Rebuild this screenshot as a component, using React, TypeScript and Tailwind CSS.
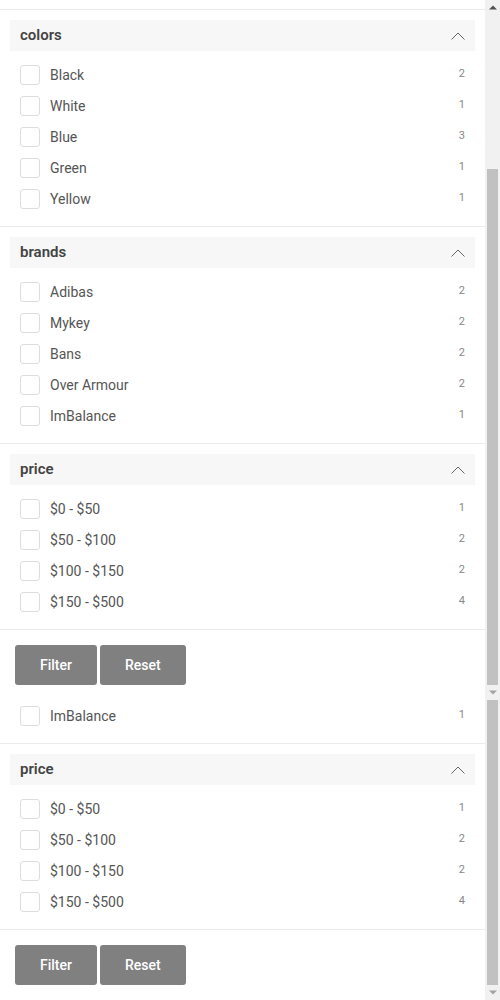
import React from "react";

type Item = [string, number];

interface Section {
  title: string;
  items: Item[];
}

const colors: Item[] = [
  ["Black", 2],
  ["White", 1],
  ["Blue", 3],
  ["Green", 1],
  ["Yellow", 1],
];

const brands: Item[] = [
  ["Adibas", 2],
  ["Mykey", 2],
  ["Bans", 2],
  ["Over Armour", 2],
  ["ImBalance", 1],
];

const prices: Item[] = [
  ["$0 - $50", 1],
  ["$50 - $100", 2],
  ["$100 - $150", 2],
  ["$150 - $500", 4],
];

function Row({ label, count }: { label: string; count: number }) {
  return (
    <li className="flex h-[31px] items-center px-[10px]">
      <span className="h-5 w-5 shrink-0 rounded-[3px] border border-[#dddddd] bg-white" />
      <span className="ml-[10px] flex-1 text-sm text-[#555]">{label}</span>
      <span className="text-[11px] text-[#888]">{count}</span>
    </li>
  );
}

function FilterSection({ title, items }: Section) {
  return (
    <div className="border-b border-[#ebebeb] px-[10px] pt-[10px] pb-3">
      <div className="flex h-[31px] items-center justify-between bg-[#f7f7f7] px-[10px]">
        <span className="text-[15px] font-semibold text-[#444]">{title}</span>
        <svg width="14" height="8" viewBox="0 0 14 8" fill="none">
          <polyline points="0.5,7.5 7,1 13.5,7.5" stroke="#666" strokeWidth="1" />
        </svg>
      </div>
      <ul className="pt-2">
        {items.map(([label, count]) => (
          <Row key={label} label={label} count={count} />
        ))}
      </ul>
    </div>
  );
}

function Buttons() {
  return (
    <div className="flex gap-[3px] p-[15px]">
      <button className="h-10 rounded-[3px] bg-[#808080] px-[25px] text-sm font-medium text-white">
        Filter
      </button>
      <button className="h-10 rounded-[3px] bg-[#808080] px-[25px] text-sm font-medium text-white">
        Reset
      </button>
    </div>
  );
}

function Arrow({ up, dark }: { up?: boolean; dark?: boolean }) {
  return (
    <div className="flex h-[15px] shrink-0 items-center justify-center">
      <svg width="8" height="5" viewBox="0 0 8 5">
        <polygon
          points={up ? "0,4.5 4,0.5 8,4.5" : "0,0.5 4,4.5 8,0.5"}
          fill={dark ? "#505050" : "#a3a3a3"}
        />
      </svg>
    </div>
  );
}

export default function App() {
  return (
    <div className="flex h-screen flex-col bg-white font-['Roboto','Liberation_Sans',sans-serif]">
      {/* filter drawer, scrolled to its end */}
      <div className="flex h-[700px] shrink-0">
        <div className="flex-1 overflow-hidden">
          <div className="h-[10px] border-b border-[#ebebeb]" />
          <FilterSection title="colors" items={colors} />
          <FilterSection title="brands" items={brands} />
          <FilterSection title="price" items={prices} />
          <Buttons />
        </div>
        <div className="flex w-[15px] flex-col bg-[#f1f1f1]">
          <Arrow up dark />
          <div className="h-[154px]" />
          <div className="mx-[2px] flex-1 bg-[#c1c1c1]" />
          <Arrow />
        </div>
      </div>

      {/* page below */}
      <div className="flex flex-1 overflow-hidden">
        <div className="flex-1 overflow-hidden">
          <div className="border-b border-[#ebebeb] px-[10px] pb-3">
            <ul>
              <Row label="ImBalance" count={1} />
            </ul>
          </div>
          <FilterSection title="price" items={prices} />
          <Buttons />
        </div>
        <div className="flex w-[15px] flex-col bg-[#f1f1f1]">
          <div className="mx-[2px] flex-1 bg-[#c1c1c1]" />
          <Arrow />
        </div>
      </div>
    </div>
  );
}
